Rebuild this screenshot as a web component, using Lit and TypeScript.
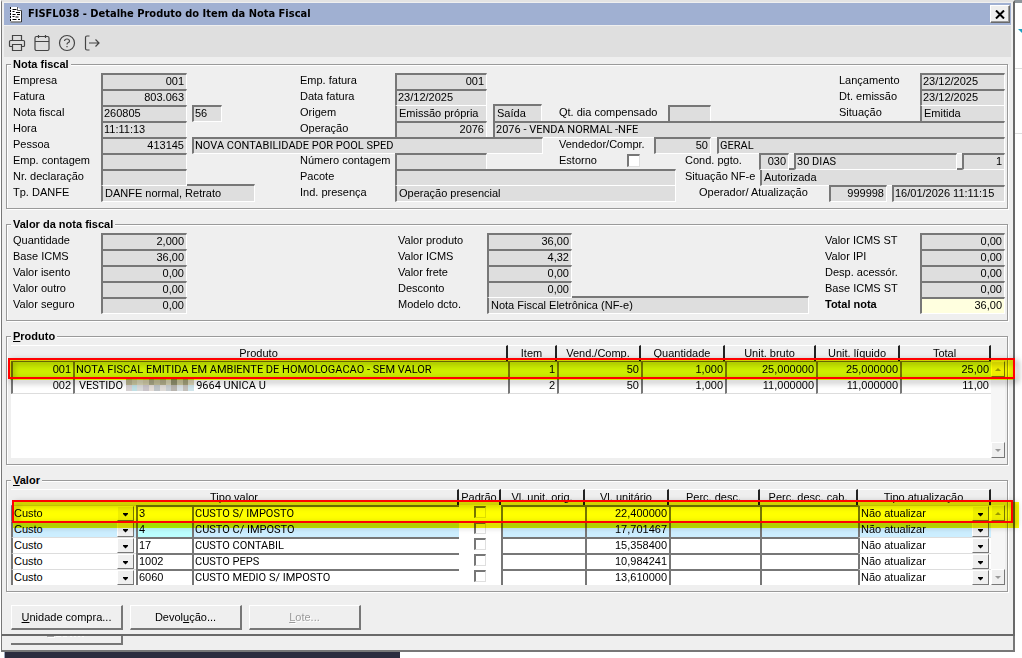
import { LitElement, html, css, svg, nothing } from "lit";
import { customElement } from "lit/decorators.js";

interface Field {
  label?: string;
  name?: string;
  value?: string;
  kind?: "num" | "combo" | "total" | "check" | "caps";
  id?: string;
}
type Cell = Field | null;

const L = (label: string, id: string): Field => ({ label, id });
const F = (id: string, name: string, value = "", kind?: Field["kind"]): Field => ({ id, name, value, kind });

const NOTA: { cls: string; cells: Cell[] }[] = [
  { cls: "r-date", cells: [L("Empresa", "empresa"), F("empresa", "Empresa", "001", "num"), null, L("Emp. fatura", "empfat"), F("empfat", "Emp. fatura", "001", "num"), null, L("Lançamento", "lanc"), F("lanc", "Lançamento", "23/12/2025")] },
  { cls: "r-date", cells: [L("Fatura", "fatura"), F("fatura", "Fatura", "803.063", "num"), null, L("Data fatura", "datafat"), F("datafat", "Data fatura", "23/12/2025"), null, L("Dt. emissão", "emissao"), F("emissao", "Dt. emissão", "23/12/2025")] },
  { cls: "r-nota", cells: [L("Nota fiscal", "nota"), F("nota", "Nota fiscal", "260805"), null, F("serie", "Série", "56"), null, L("Origem", "origem"), F("origem", "Origem", "Emissão própria", "combo"), null, F("tipo", "Tipo", "Saída", "combo"), null, L("Qt. dia compensado", "qtdia"), F("qtdia", "Qt. dia compensado"), null, L("Situação", "situacao"), F("situacao", "Situação", "Emitida", "combo")] },
  { cls: "r-hora", cells: [L("Hora", "hora"), F("hora", "Hora", "11:11:13"), null, L("Operação", "oper"), F("oper", "Operação", "2076", "num"), null, F("operdesc", "Descrição da operação", "2076 - VENDA NORMAL -NFE", "caps")] },
  { cls: "r-pessoa", cells: [L("Pessoa", "pessoa"), F("pessoa", "Pessoa", "413145", "num"), null, F("pessoanome", "Nome da pessoa", "NOVA CONTABILIDADE POR POOL SPED", "caps"), null, L("Vendedor/Compr.", "vend"), F("vend", "Vendedor", "50", "num"), null, F("vendnome", "Nome do vendedor", "GERAL", "caps")] },
  { cls: "r-cont", cells: [L("Emp. contagem", "empcont"), F("empcont", "Emp. contagem"), null, L("Número contagem", "numcont"), F("numcont", "Número contagem"), null, L("Estorno", "estorno"), { id: "estorno", kind: "check" }, null, L("Cond. pgto.", "cond"), F("cond", "Cond. pgto.", "030", "num"), null, F("conddesc", "Descrição da condição", "30 DIAS", "caps"), null, F("parc", "Parcelas", "1", "num")] },
  { cls: "r-decl", cells: [L("Nr. declaração", "decl"), F("decl", "Nr. declaração"), null, L("Pacote", "pacote"), F("pacote", "Pacote"), null, L("Situação NF-e", "sitnfe"), F("sitnfe", "Situação NF-e", "Autorizada", "combo")] },
  { cls: "r-danfe", cells: [L("Tp. DANFE", "danfe"), F("danfe", "Tp. DANFE", "DANFE normal, Retrato", "combo"), null, L("Ind. presença", "indpres"), F("indpres", "Ind. presença", "Operação presencial", "combo"), null, L("Operador/ Atualização", "operador"), F("operador", "Operador", "999998", "num"), null, F("atualiz", "Atualização", "16/01/2026 11:11:15")] },
];

const VALORES: { cls: string; cells: Cell[] }[] = [
  ["Quantidade", "2,000", "Valor produto", "36,00", "Valor ICMS ST", "0,00"],
  ["Base ICMS", "36,00", "Valor ICMS", "4,32", "Valor IPI", "0,00"],
  ["Valor isento", "0,00", "Valor frete", "0,00", "Desp. acessór.", "0,00"],
  ["Valor outro", "0,00", "Desconto", "0,00", "Base ICMS ST", "0,00"],
  ["Valor seguro", "0,00", "Modelo dcto.", "Nota Fiscal Eletrônica (NF-e)", "Total nota", "36,00"],
].map(([a, av, b, bv, c, cv], i) => ({
  cls: i === 4 ? "r-modelo" : "r-valor",
  cells: [
    L(a, `va${i}`), F(`va${i}`, a, av, "num"), null,
    L(b, `vb${i}`), F(`vb${i}`, b, bv, i === 4 ? "combo" : "num"), null,
    L(c, `vc${i}`), F(`vc${i}`, c, cv, i === 4 ? "total" : "num"),
  ],
}));

const PRODUTOS = [
  { cod: "001", nome: ["NOTA FISCAL EMITIDA EM AMBIENTE DE HOMOLOGACAO - SEM VALOR"], nums: ["1", "50", "1,000", "25,000000", "25,000000", "25,00"] },
  { cod: "002", nome: ["VESTIDO", "9664 UNICA U"], nums: ["2", "50", "1,000", "11,000000", "11,000000", "11,00"] },
];

const CUSTOS = [
  ["3", "CUSTO S/ IMPOSTO", "22,400000"],
  ["4", "CUSTO C/ IMPOSTO", "17,701467"],
  ["17", "CUSTO CONTABIL", "15,358400"],
  ["1002", "CUSTO PEPS", "10,984241"],
  ["6060", "CUSTO MEDIO S/ IMPOSTO", "13,610000"],
];

/* Mosaic blocks that hide part of a product name, row by row. */
const MOSAIC = [
  ["#b9b48f", "#c9c6a0", "#d6d3b4", "#cfc9a6", "#a9a684", "#c2bd97", "#b1ad8a", "#d3cfae", "#8f8f6c", "#c8c49c", "#a3a07a", "#d8d4b6"],
  ["#d5d0d2", "#c0dfe4", "#d9d9d9", "#c9c4c9", "#e3dcd6", "#bfc3c6", "#dedad6", "#c8cdd0", "#b8b4ae", "#d9dfe2", "#c3bfba", "#cfe4ea"],
];

const icon = (body: unknown) => html`<svg width="18" height="18" viewBox="0 0 18 18" fill="none" stroke="#444" stroke-width="1.2" aria-hidden="true">${body}</svg>`;

@customElement("app-root")
export class AppRoot extends LitElement {
  static styles = css`
    :host { display: block; background: #fff; font: 11px/14px "Liberation Sans", Arial, sans-serif; color: #000; }
    * { box-sizing: border-box; }
    .desk { display: flex; min-height: 100vh; overflow: hidden; }
    .main { flex: 1; min-width: 0; display: flex; flex-direction: column; }
    .side { width: 7px; border-top: 3px solid #8d959b; position: relative; }
    .side svg { position: absolute; right: 0; top: 26px; }
    .side i { position: absolute; left: 0; right: 0; height: 1px; background: #ddd; }
    .side .s1 { top: 65px; }
    .side .s2 { top: 130px; }
    .win { background: #efefef; border: solid #696969; border-width: 0 2px 2px 1px; border-left-color: #777; border-top: 2px solid #e3e3e3; margin-left: 1px; padding: 0 2px 0 2px; }
    .title { display: flex; align-items: center; gap: 5px; height: 22px; margin-top: 1px; padding: 0 1px 0 5px; background: #a0b0d2; font: bold 11px/14px "DejaVu Sans Condensed", "Noto Sans", sans-serif; }
    .title h1 { flex: 1; margin: 0; font: inherit; }
    .close { width: 20px; height: 18px; padding: 0; display: grid; place-items: center; background: #efefef; border: 1px solid; border-color: #fff #696969 #696969 #fff; box-shadow: inset -1px -1px #999; }
    .tools { display: flex; gap: 7px; height: 31px; padding: 8px 4px; margin-top: 1px; background: #dfdfdf; }
    .tools button { padding: 0; border: 0; background: none; width: 18px; height: 18px; }
    .body { display: flex; flex-direction: column; gap: 15px; padding: 7px 3px 4px 2px; }
    section { position: relative; border: 1px solid #9a9a9a; box-shadow: 1px 1px #fff, inset 1px 1px #fff; }
    h2 { position: absolute; left: 4px; top: -8px; margin: 0; padding: 0 2px; background: #efefef; font: bold 11px/14px "Liberation Sans", sans-serif; }
    u { text-underline-offset: 1px; }
    .form { padding: 8px 2px 7px 6px; }
    .row { display: grid; height: 16px; }
    .row label { line-height: 15px; white-space: nowrap; }
    .row .strong { font-weight: bold; }
    .r-date { grid-template-columns: 88px 86px 113px 95px 92px 1fr 81px 85px; }
    .r-nota { grid-template-columns: 88px 86px 5px 30px 78px 95px 92px 6px 49px 17px 109px 43px 1fr 81px 85px; }
    .r-hora { grid-template-columns: 88px 86px 113px 95px 92px 6px 1fr; }
    .r-pessoa { grid-template-columns: 88px 86px 5px 351px 16px 95px 57px 6px 1fr; }
    .r-cont { grid-template-columns: 88px 86px 113px 95px 92px 72px 68px 14px 44px 74px 30px 5px 1fr 5px 43px; }
    .r-decl { grid-template-columns: 88px 86px 113px 95px 281px 9px 75px 1fr; }
    .r-danfe { grid-template-columns: 88px 154px 45px 95px 281px 1fr 130px 58px 5px 113px; }
    .r-valor { grid-template-columns: 88px 86px 211px 89px 85px 1fr 95px 85px; }
    .r-modelo { grid-template-columns: 88px 86px 211px 89px 322px 1fr 95px 85px; }
    .field { position: relative; width: 100%; min-width: 0; height: 17px; margin: 0; padding: 0 2px 2px 1px; font: inherit; color: #000; background: #dedede; border: solid; border-width: 2px 1px 1px 2px; border-color: #777 #fff #fff #777; border-radius: 0; outline: 0; }
    .num, .total { text-align: right; }
    .total { background: #ffffdf; }
    .combo { position: static; height: 18px; margin-top: -1px; padding: 0 0 1px 2px; }
    .caps { font-family: Roboto, "Liberation Sans", sans-serif; }
    .check { appearance: none; width: 13px; height: 13px; margin: 1px 0 0; background: #fff; border: solid; border-width: 2px 1px 1px 2px; border-color: #777 #dfdfdf #dfdfdf #777; }
    .grid { position: relative; display: flex; margin: 8px 2px 6px 4px; background: #fff; }
    .prod { min-height: 113px; }
    table { flex: 1; align-self: flex-start; table-layout: fixed; width: 100%; border-collapse: separate; border-spacing: 0; }
    th { height: 16px; padding: 1px 0 0; font-weight: normal; line-height: 13px; white-space: nowrap; background: #efefef; border-top: 1px solid #fff; border-right: 2px solid #222; vertical-align: top; }
    td { height: 16px; padding: 0 1px; line-height: 14px; white-space: nowrap; background: #fff; overflow: hidden; border: solid #777; border-width: 1px 0 0 2px; vertical-align: top; }
    .prod td { border-top-color: #ddd; }
    .prod tr:first-child td { border-top-color: #777; }
    .prod tr:last-child td { border-bottom: 1px solid #ddd; }
    .prod .sel td, .cost .sel td { background: #cef; }
    .prod .caps { line-height: 15px; }
    .prod .split { padding-left: 4px; }
    .cost .sel .cod { background: #bff; }
    .cost .sel .tick, .cost .tick { background: #fff; border-top: 0; border-left: 0; text-align: center; }
    .cost td { border-top-width: 2px; line-height: 13px; }
    .cost .lov { border-top: 1px solid #ddd; padding: 0 2px 0 1px; }
    .r { text-align: right; padding-right: 2px; }
    .blank { margin: 0 2px 0 3px; vertical-align: top; }
    .tick input { margin: 1px 0 0; vertical-align: top; width: 12px; height: 12px; }
    .drop { display: flex; height: 15px; }
    .drop select { flex: 1; min-width: 0; appearance: none; border: 0; padding: 0; margin: 0; background: none; font: inherit; line-height: 14px; color: #000; height: 14px; outline: 0; }
    .drop span { width: 17px; height: 15px; padding-top: 3px; flex: none; display: grid; place-items: center; background: #efefef; border: 1px solid; border-color: #fff #777 #777 #fff; }
    .bar { width: 14px; display: flex; flex-direction: column; justify-content: space-between; padding-top: 16px; background: #f6f6f6; box-shadow: inset 0 16px #efefef; }
    .bar button { width: 14px; height: 16px; padding: 0; display: grid; place-items: center; background: #efefef; border: 1px solid; border-color: #fff #777 #777 #fff; }
    .ink { position: absolute; background: #ff0; mix-blend-mode: multiply; pointer-events: none; }
    .frame { position: absolute; border: 2px solid #f00; filter: drop-shadow(3px 3px 3px rgba(0, 0, 0, 0.55)); pointer-events: none; }
    .prod .ink { left: -1px; right: -8px; top: 15px; height: 20px; }
    .prod .frame { left: -3px; right: -10px; top: 13px; height: 21px; }
    .cost .ink { left: 2px; right: -14px; top: 13px; height: 26px; }
    .cost .frame { left: 1px; right: -8px; top: 11px; height: 23px; }
    .actions { display: flex; gap: 7px; padding: 0 5px; margin-top: -2px; }
    .push { width: 112px; height: 25px; padding: 0; font: inherit; color: #000; background: #efefef; border: solid; border-width: 1px 2px 2px 1px; border-color: #fff #777 #777 #fff; }
    .push:disabled { color: #999; text-shadow: 1px 1px #fff; }
    .back { height: 16px; margin-left: 1px; padding: 0 9px; background: #efefef; border: solid #777; border-width: 0 2px 2px 1px; }
    .stub { width: 112px; height: 9px; border: solid #777; border-width: 0 2px 2px 0; }
    .stub svg { display: block; margin-left: 36px; }
    .desktop { flex: 1; margin-left: 4px; width: 396px; background: #2b2c3e; border-left: 1px solid #9aa7bb; }
  `;

  private cell(c: Cell) {
    if (!c) return html`<span></span>`;
    if (c.label) return html`<label for=${c.id!} class=${c.label === "Total nota" ? "strong" : ""}>${c.label}</label>`;
    if (c.kind === "check") return html`<input id=${c.id!} type="checkbox" class="check">`;
    return html`<input id=${c.id!} class="field ${c.kind ?? ""}" aria-label=${c.name!} .value=${c.value ?? ""} readonly>`;
  }

  private rows(list: { cls: string; cells: Cell[] }[]) {
    return list.map((r) => html`<div class="row ${r.cls}">${r.cells.map((c) => this.cell(c))}</div>`);
  }

  private bar() {
    return html`<div class="bar">
      <button aria-label="Subir"><svg width="6" height="3"><path d="M3 0 6 3H0z" fill="#999"/></svg></button>
      <button aria-label="Descer"><svg width="6" height="3"><path d="M0 0h6L3 3z" fill="#999"/></svg></button>
    </div>`;
  }

  private drop(name: string, value: string) {
    return html`<div class="drop"><select aria-label=${name}><option>${value}</option></select><span><svg width="5" height="4"><path d="M0 0h5v1L2.500 3.500 0 1z" fill="#000"/></svg></span></div>`;
  }

  private mosaic() {
    return html`<svg class="blank" width="68" height="13" viewBox="0 0 72 14" preserveAspectRatio="none" shape-rendering="crispEdges" aria-hidden="true">
      ${MOSAIC.map((line, y) => line.map((c, x) => svg`<rect x=${x * 6} y=${y * 7} width="6" height="7" fill=${c}/>`))}
    </svg>`;
  }

  render() {
    return html`<div class="desk"><div class="main">
      <div class="win">
        <header class="title">
          <svg width="14" height="17" viewBox="0 0 14 17" aria-hidden="true"><path d="M1.500 1h7l4 3.500v12h-11z" fill="#fff"/><path d="M1.500 1v15" stroke="#000" stroke-dasharray="2 1"/><path d="M1.500 16h11V4.500" stroke="#333" fill="none"/><path d="M8.500 1v3.500h4" stroke="#333" fill="none" stroke-width=".8"/><path d="M3.500 3.500h4M3.500 5.500h2M7 6.500h4M3.500 8.500h3M8 8.500h3M3.500 10.500h2M6.500 11h3M3.500 13.500h4M9 13.500h2" stroke="#000"/></svg>
          <h1>FISFL038 - Detalhe Produto do Item da Nota Fiscal</h1>
          <button class="close" aria-label="Fechar"><svg width="10" height="9"><path d="M1 .5l8 8M9 .5l-8 8" stroke="#000" stroke-width="2"/></svg></button>
        </header>
        <nav class="tools">
          <button aria-label="Imprimir">${icon(svg`<path d="M4.500 6.500V1.500h9v5M4.500 12.500h-2q-1 0-1-1v-4q0-1 1-1h13q1 0 1 1v4q0 1-1 1h-2M4.500 10.500h9v6h-9z"/>`)}</button>
          <button aria-label="Calendário">${icon(svg`<rect x="2" y="2.500" width="14" height="14" rx="1.500"/><path d="M2 7.500h14M5.500 1v3M12.500 1v3"/>`)}</button>
          <button aria-label="Ajuda">${icon(svg`<circle cx="9" cy="9" r="7.500"/><path d="M6.500 7q.2-2 2.500-2t2.500 2q0 1.200-1.500 1.800-1 .4-1 1.600M9 12v1.300"/>`)}</button>
          <button aria-label="Sair">${icon(svg`<path d="M6.500 2H4Q2.500 2 2.500 3.500v11Q2.500 16 4 16h2.500M6 9h10M12.500 5.500 16 9 12.500 12.500"/>`)}</button>
        </nav>
        <div class="body">
          <section class="form"><h2>Nota fiscal</h2>${this.rows(NOTA)}</section>
          <section class="form"><h2>Valor da nota fiscal</h2>${this.rows(VALORES)}</section>
          <section><h2><u>P</u>roduto</h2>
            <div class="grid prod">
              <table>
                <colgroup><col width="62"><col><col width="49"><col width="84"><col width="84"><col width="91"><col width="84"><col width="91"></colgroup>
                <thead><tr><th colspan="2">Produto</th>${["Item", "Vend./Comp.", "Quantidade", "Unit. bruto", "Unit. líquido", "Total"].map((t) => html`<th>${t}</th>`)}</tr></thead>
                <tbody>${PRODUTOS.map((p, i) => html`<tr class=${i === 0 ? "sel" : ""}><td class="r">${p.cod}</td><td class="caps ${p.nome[1] ? "split" : ""}">${p.nome[0]}${p.nome[1] ? html`${this.mosaic()}${p.nome[1]}` : nothing}</td>${p.nums.map((n) => html`<td class="r">${n}</td>`)}</tr>`)}</tbody>
              </table>
              ${this.bar()}
              <div class="ink"></div><div class="frame"></div>
            </div>
          </section>
          <section><h2><u>V</u>alor</h2>
            <div class="grid cost">
              <table>
                <colgroup><col width="125"><col width="56"><col><col width="42"><col width="84"><col width="84"><col width="91"><col width="98"><col width="133"></colgroup>
                <thead><tr><th colspan="3">Tipo valor</th>${["Padrão", "Vl. unit. orig.", "Vl. unitário", "Perc. desc.", "Perc. desc. cab.", "Tipo atualização"].map((t) => html`<th>${t}</th>`)}</tr></thead>
                <tbody>${CUSTOS.map(([cod, nome, v], i) => html`<tr class=${i === 1 ? "sel" : ""}>
                  <td class="lov">${this.drop("Tipo", "Custo")}</td><td class="cod">${cod}</td><td class="caps">${nome}</td>
                  <td class="tick"><input type="checkbox" class="check" aria-label="Padrão"></td>
                  <td></td><td class="r">${v}</td><td></td><td></td>
                  <td class="lov">${this.drop("Tipo atualização", "Não atualizar")}</td></tr>`)}</tbody>
              </table>
              ${this.bar()}
              <div class="ink"></div><div class="frame"></div>
            </div>
          </section>
          <div class="actions">
            <button class="push"><u>U</u>nidade compra...</button>
            <button class="push">Devol<u>u</u>ção...</button>
            <button class="push" disabled><u>L</u>ote...</button>
          </div>
        </div>
      </div>
      <div class="back"><div class="stub"><svg width="40" height="2"><path d="M0 .5h7" stroke="#aaa"/><path d="M1 1.500h7M9 .5h5M16 .5h4M23 .5h2M27 .5h2M31 .5h2M35 .5h2" stroke="#fff"/></svg></div></div>
      <div class="desktop"></div>
    </div>
    <aside class="side"><svg width="4" height="4" aria-hidden="true"><path d="M0 0h4v4z" fill="#1a9dc0"/></svg><i class="s1"></i><i class="s2"></i></aside>
    </div>`;
  }
}
